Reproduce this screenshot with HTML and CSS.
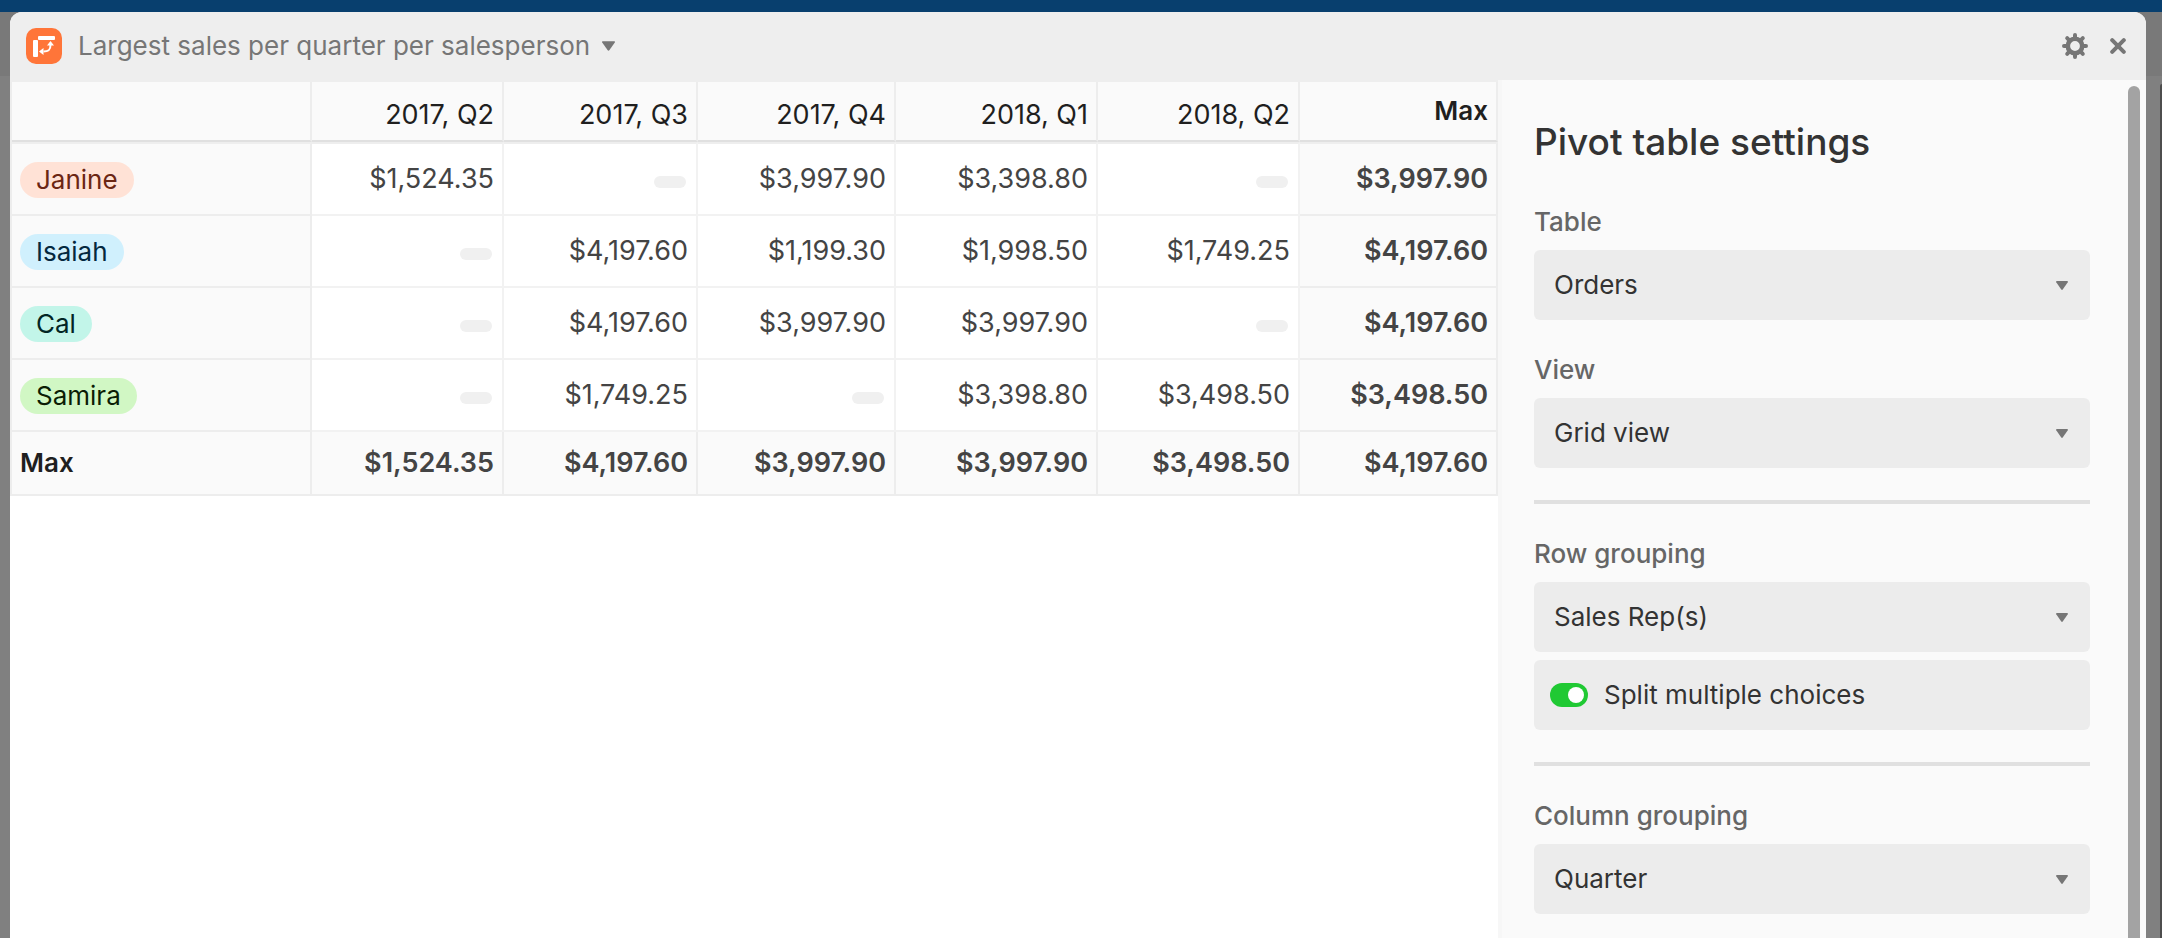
FILE: index.html
```html
<!DOCTYPE html>
<html lang="en">
<head>
    <meta charset="UTF-8">
    <meta name="viewport" content="width=device-width, initial-scale=1.0">
    <title>Largest sales per quarter per salesperson</title>
    <link rel="stylesheet" href="styles.css">
</head>
<body>
    <div class="topbar"></div>
    <div class="backdrop">
        <div class="dialog">
            <header class="dialog-header">
                <svg class="app-icon" viewBox="0 0 36 36" aria-hidden="true">
                    <rect width="36" height="36" rx="10" fill="#ff7539"/>
                    <rect x="12" y="8" width="17" height="4" rx="1" fill="#fff"/>
                    <rect x="7" y="12" width="5" height="17" rx="1" fill="#fff"/>
                    <path d="M24.500 17c0 5-2 6.500-7 6.500" fill="none" stroke="#fff" stroke-width="2"/>
                    <path d="M24.500 13l3.500 4.500h-7zM13 23.500l4.500-3.500v7z" fill="#fff"/>
                </svg>
                <button class="title-btn" type="button">
                    <span>Largest sales per quarter per salesperson</span>
                    <svg class="caret caret-big" viewBox="0 0 12 9" aria-hidden="true"><path d="M1 0h10q1.500 0 .8 1.300L6.900 8.300q-.9 1.200-1.800 0L.2 1.300Q-.5 0 1 0z"/></svg>
                </button>
                <div class="header-actions">
                    <button class="icon-btn" type="button" aria-label="Settings">
                        <svg width="26" height="26" viewBox="-13 -13 26 26" aria-hidden="true">
                            <circle r="7.200" fill="none" stroke="#767676" stroke-width="4.600"/>
                            <g stroke="#767676" stroke-width="4" stroke-linecap="round">
                                <path d="M0-9v-2M0 9v2M-9 0h-2M9 0h2M6.400-6.400l1.400-1.400M6.400 6.400l1.400 1.400M-6.400 6.400l-1.400 1.400M-6.400-6.400l-1.400-1.400"/>
                            </g>
                        </svg>
                    </button>
                    <button class="icon-btn" type="button" aria-label="Close">
                        <svg width="16" height="16" viewBox="0 0 16 16" aria-hidden="true"><path d="M2.200 2.200l11.600 11.600M13.800 2.200L2.200 13.800" stroke="#767676" stroke-width="4" stroke-linecap="round"/></svg>
                    </button>
                </div>
            </header>

            <div class="dialog-body">
                <main class="table-pane">
                    <table class="pivot">
                        <colgroup>
                            <col class="col-name">
                            <col class="col-q2">
                            <col class="col-q3">
                            <col class="col-q4">
                            <col class="col-wide">
                            <col class="col-wide">
                            <col class="col-max">
                        </colgroup>
                        <thead>
                            <tr>
                                <td></td>
                                <th scope="col">2017, Q2</th>
                                <th scope="col">2017, Q3</th>
                                <th scope="col">2017, Q4</th>
                                <th scope="col">2018, Q1</th>
                                <th scope="col">2018, Q2</th>
                                <th scope="col" class="max-head">Max</th>
                            </tr>
                        </thead>
                        <tbody>
                            <tr>
                                <th scope="row"><span class="pill pill-red">Janine</span></th>
                                <td>$1,524.35</td>
                                <td><span class="empty"></span></td>
                                <td>$3,997.90</td>
                                <td>$3,398.80</td>
                                <td><span class="empty"></span></td>
                                <td class="total">$3,997.90</td>
                            </tr>
                            <tr>
                                <th scope="row"><span class="pill pill-blue">Isaiah</span></th>
                                <td><span class="empty"></span></td>
                                <td>$4,197.60</td>
                                <td>$1,199.30</td>
                                <td>$1,998.50</td>
                                <td>$1,749.25</td>
                                <td class="total">$4,197.60</td>
                            </tr>
                            <tr>
                                <th scope="row"><span class="pill pill-teal">Cal</span></th>
                                <td><span class="empty"></span></td>
                                <td>$4,197.60</td>
                                <td>$3,997.90</td>
                                <td>$3,997.90</td>
                                <td><span class="empty"></span></td>
                                <td class="total">$4,197.60</td>
                            </tr>
                            <tr>
                                <th scope="row"><span class="pill pill-green">Samira</span></th>
                                <td><span class="empty"></span></td>
                                <td>$1,749.25</td>
                                <td><span class="empty"></span></td>
                                <td>$3,398.80</td>
                                <td>$3,498.50</td>
                                <td class="total">$3,498.50</td>
                            </tr>
                        </tbody>
                        <tfoot>
                            <tr>
                                <th scope="row">Max</th>
                                <td>$1,524.35</td>
                                <td>$4,197.60</td>
                                <td>$3,997.90</td>
                                <td>$3,997.90</td>
                                <td>$3,498.50</td>
                                <td>$4,197.60</td>
                            </tr>
                        </tfoot>
                    </table>
                </main>

                <aside class="settings">
                    <form class="settings-form">
                        <h2>Pivot table settings</h2>

                        <label class="field-label" for="table">Table</label>
                        <div class="select-box">
                            <select id="table"><option>Orders</option></select>
                            <svg class="caret" viewBox="0 0 12 9" aria-hidden="true"><path d="M1 0h10q1.500 0 .8 1.300L6.900 8.300q-.9 1.200-1.800 0L.2 1.300Q-.5 0 1 0z"/></svg>
                        </div>

                        <label class="field-label" for="view">View</label>
                        <div class="select-box">
                            <select id="view"><option>Grid view</option></select>
                            <svg class="caret" viewBox="0 0 12 9" aria-hidden="true"><path d="M1 0h10q1.500 0 .8 1.300L6.900 8.300q-.9 1.200-1.800 0L.2 1.300Q-.5 0 1 0z"/></svg>
                        </div>

                        <hr>

                        <label class="field-label" for="row-group">Row grouping</label>
                        <div class="select-box">
                            <select id="row-group"><option>Sales Rep(s)</option></select>
                            <svg class="caret" viewBox="0 0 12 9" aria-hidden="true"><path d="M1 0h10q1.500 0 .8 1.300L6.900 8.300q-.9 1.200-1.800 0L.2 1.300Q-.5 0 1 0z"/></svg>
                        </div>
                        <label class="toggle-row" for="split">
                            <input class="toggle" type="checkbox" id="split" checked>
                            <span>Split multiple choices</span>
                        </label>

                        <hr>

                        <label class="field-label" for="col-group">Column grouping</label>
                        <div class="select-box">
                            <select id="col-group"><option>Quarter</option></select>
                            <svg class="caret" viewBox="0 0 12 9" aria-hidden="true"><path d="M1 0h10q1.500 0 .8 1.300L6.900 8.300q-.9 1.200-1.800 0L.2 1.300Q-.5 0 1 0z"/></svg>
                        </div>
                    </form>
                    <div class="scroll-thumb"></div>
                </aside>
            </div>
        </div>
        <div class="page-edge"></div>
    </div>
</body>
</html>
```
FILE: styles.css
```css
* {
    box-sizing: border-box;
}

body {
    margin: 0;
    height: 100vh;
    display: flex;
    flex-direction: column;
    overflow: hidden;
    font-family: Inter, "Liberation Sans", sans-serif;
    font-size: 26px;
    line-height: 32px;
    color: #333;
}

button, select, input {
    font: inherit;
    color: inherit;
    margin: 0;
}

.topbar {
    flex: none;
    height: 12px;
    background: #083f6e;
}

/* dimmed page behind the dialog */
.backdrop {
    flex: 1;
    min-height: 0;
    display: flex;
    padding-left: 10px;
    background: linear-gradient(#797979 64px, #808080 64px);
}

.page-edge {
    width: 2px;
    margin: 72px 0 0 14px;
    background: #4d4d4d;
    border-top-left-radius: 2px;
}

.dialog {
    flex: 1;
    min-width: 0;
    display: flex;
    flex-direction: column;
    background: #fff;
    border-radius: 12px 12px 0 0;
    overflow: hidden;
}

/* header */
.dialog-header {
    flex: none;
    display: flex;
    align-items: center;
    height: 68px;
    padding: 0 20px 0 16px;
    background: #eee;
}

.app-icon {
    width: 36px;
    height: 36px;
}

.title-btn {
    display: flex;
    align-items: center;
    gap: 12px;
    padding: 0;
    margin-left: 16px;
    border: none;
    background: none;
    color: #767676;
    cursor: pointer;
}

.header-actions {
    display: flex;
    align-items: center;
    gap: 22px;
    margin-left: auto;
}

.icon-btn {
    display: flex;
    padding: 0;
    border: none;
    background: none;
    cursor: pointer;
}

.caret {
    width: 12px;
    height: 9px;
    fill: #767676;
}

.caret-big {
    width: 13px;
    height: 10px;
}

.dialog-body {
    flex: 1;
    min-height: 0;
    display: flex;
}

/* pivot table */
.table-pane {
    flex: 1;
    min-width: 0;
    border-top: 2px solid #eee;
}

.pivot {
    width: 100%;
    table-layout: fixed;
    border-collapse: separate;
    border-spacing: 0;
    border-left: 2px solid #ededed;
    font-size: 27px;
    color: #444;
}

.col-name { width: 300px; }
.col-q2 { width: 192px; }
.col-q3 { width: 194px; }
.col-q4 { width: 198px; }
.col-wide { width: 202px; }
.col-max { width: 198px; }

.pivot th,
.pivot td {
    height: 72px;
    padding: 0 8px;
    border-right: 2px solid #ededed;
    border-bottom: 2px solid #ededed;
    text-align: right;
    font-weight: 400;
}

.pivot tbody td:not(.total) {
    border-color: #f2f2f2;
}

.pivot thead th,
.pivot thead td {
    height: 60px;
    padding-top: 8px;
    border-bottom-color: #e0e0e0;
    background: #fafafa;
    color: #1f1f1f;
}

.pivot thead .max-head {
    padding-top: 0;
    font-size: 26px;
    font-weight: 600;
}

.pivot tbody tr:first-child > * {
    height: 74px;
    border-top: 2px solid #eee;
}

.pivot tbody th,
.pivot tbody .total,
.pivot tfoot th,
.pivot tfoot td {
    background: #fafafa;
}

.pivot tbody th,
.pivot tfoot th {
    font-size: 26px;
    text-align: left;
}

.pivot tfoot th,
.pivot tfoot td {
    height: 64px;
    font-weight: 600;
}

.pivot tfoot th {
    color: #1f1f1f;
}

.pivot .total {
    font-weight: 600;
}

.pill {
    display: block;
    width: fit-content;
    height: 36px;
    margin-top: 2px;
    padding: 2px 16px;
    border-radius: 18px;
}

.pill-red { background: #ffe2d6; color: #6b2613; }
.pill-blue { background: #d0f0fd; color: #04283f; }
.pill-teal { background: #c2f5e9; color: #012524; }
.pill-green { background: #d1f7c4; color: #0b1d05; }

.empty {
    display: inline-block;
    width: 32px;
    height: 12px;
    margin-right: 2px;
    border-radius: 6px;
    background: #f0f0f0;
}

/* settings panel */
.settings {
    flex: none;
    width: 648px;
    max-width: 45%;
    display: flex;
    border-left: 4px solid #f7f7f7;
    background: #fafafa;
}

.settings-form {
    flex: 1;
    min-width: 0;
    padding: 38px 38px 0 32px;
}

.settings h2 {
    margin: 0;
    padding-bottom: 6px;
    font-size: 37px;
    line-height: 48px;
    font-weight: 500;
    color: #333;
}

.field-label {
    display: block;
    padding: 34px 0 12px;
    font-weight: 500;
    color: #666;
}

/* the caret shares the grid cell with the select */
.select-box {
    display: grid;
    align-items: center;
}

.select-box select,
.select-box .caret {
    grid-area: 1 / 1;
}

.select-box select {
    appearance: none;
    width: 100%;
    height: 70px;
    padding: 0 48px 0 20px;
    border: none;
    border-radius: 6px;
    background: #ececec;
}

.select-box .caret {
    justify-self: end;
    margin-right: 22px;
    pointer-events: none;
}

.settings hr {
    height: 4px;
    margin: 32px 0 0;
    border: none;
    background: #e0e0e0;
}

.toggle-row {
    display: flex;
    align-items: center;
    gap: 16px;
    height: 70px;
    margin-top: 8px;
    padding: 0 16px;
    border-radius: 6px;
    background: #ececec;
}

.toggle {
    appearance: none;
    display: flex;
    width: 38px;
    height: 24px;
    padding: 4px;
    border-radius: 12px;
    background: #bbb;
}

.toggle::before {
    content: "";
    width: 16px;
    height: 16px;
    border-radius: 50%;
    background: #fff;
}

.toggle:checked {
    justify-content: flex-end;
    background: #20c933;
}

.scroll-thumb {
    flex: none;
    width: 12px;
    margin: 6px 6px 0 0;
    border-radius: 6px 6px 0 0;
    background: #a3a3a3;
}
```
